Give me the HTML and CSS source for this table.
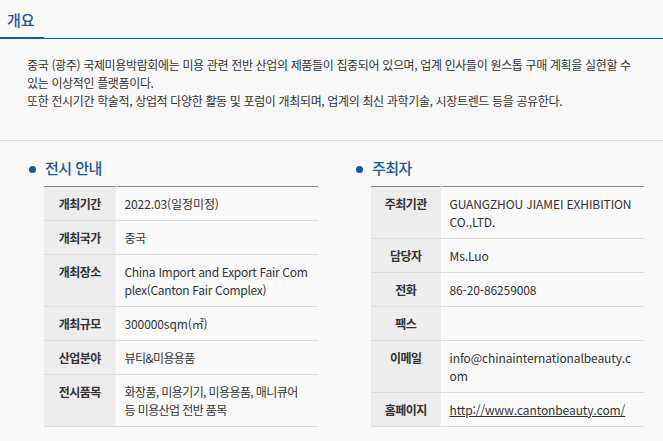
FILE: index.html
```html
<!DOCTYPE html>
<html lang="ko">
<head>
    <meta charset="UTF-8">
    <title>개요</title>
    <link rel="stylesheet" href="styles.css">
</head>
<body>

    <div class="tab-bar">
        <h2 class="tab-title">개요</h2>
    </div>

    <div class="intro">
        <p>중국 (광주) 국제미용박람회에는 미용 관련 전반 산업의 제품들이 집중되어 있으며, 업계 인사들이 원스톱 구매 계획을 실현할 수 있는 이상적인 플랫폼이다.<br>
        또한 전시기간 학술적, 상업적 다양한 활동 및 포럼이 개최되며, 업계의 최신 과학기술, 시장트렌드 등을 공유한다.</p>
    </div>

    <div class="info-wrap">
        <div class="info-box">
            <h3 class="info-title">전시 안내</h3>
            <table class="info-table">
                <tr><th>개최기간</th><td class="en">2022.03(일정미정)</td></tr>
                <tr><th>개최국가</th><td>중국</td></tr>
                <tr><th>개최장소</th><td class="en long">China Import and Export Fair Complex(Canton Fair Complex)</td></tr>
                <tr><th>개최규모</th><td class="en">300000sqm(㎡)</td></tr>
                <tr><th>산업분야</th><td>뷰티&amp;미용용품</td></tr>
                <tr><th>전시품목</th><td>화장품, 미용기기, 미용용품, 매니큐어 등 미용산업 전반 품목</td></tr>
            </table>
        </div>

        <div class="info-box">
            <h3 class="info-title">주최자</h3>
            <table class="info-table right">
                <tr><th>주최기관</th><td class="en">GUANGZHOU JIAMEI EXHIBITION CO.,LTD.</td></tr>
                <tr><th>담당자</th><td class="en">Ms.Luo</td></tr>
                <tr><th>전화</th><td class="en">86-20-86259008</td></tr>
                <tr><th>팩스</th><td></td></tr>
                <tr><th>이메일</th><td class="en">info@chinainternationalbeauty.com</td></tr>
                <tr><th>홈페이지</th><td class="en"><a href="#">http://www.cantonbeauty.com/</a></td></tr>
            </table>
        </div>
    </div>

</body>
</html>
```
FILE: styles.css
```css
body {
    margin: 0;
    background: #f9f9f9;
    font-family: "Noto Sans CJK KR", "Noto Sans", sans-serif;
    color: #333;
    font-size: 12px;
}

.tab-bar {
    height: 38px;
    background: #fafafa;
    border-bottom: 1px solid #1b5796;
}

.tab-title {
    display: inline-block;
    margin: 0;
    padding: 8px 9px 0 7px;
    height: 29px;
    box-sizing: content-box;
    border-bottom: 2px solid #1b5796;
    color: #1b5796;
    font-size: 15px;
    font-weight: 500;
    line-height: 24px;
}

.intro {
    padding: 17px 27px 30px;
    border-bottom: 1px solid #e0e0e0;
}

.intro p {
    margin: 0;
    line-height: 18px;
    letter-spacing: -0.35px;
}

.info-wrap {
    display: grid;
    grid-template-columns: 327px 1fr;
    padding: 15px 0 0 27px;
}

.info-title {
    margin: 0 0 6px;
    color: #1b5796;
    font-size: 15px;
    font-weight: 500;
    line-height: 24px;
    letter-spacing: -0.5px;
    position: relative;
    padding-left: 18px;
}

.info-title::before {
    content: "";
    position: absolute;
    left: 2px;
    top: 10px;
    width: 7px;
    height: 7px;
    border-radius: 50%;
    background: #1b5796;
}

.info-table {
    margin-left: 17px;
    width: 274px;
    table-layout: fixed;
    border-collapse: collapse;
    border-top: 1px solid #888;
}

.info-table.right {
    width: 273px;
}

.info-table th,
.info-table td {
    border-bottom: 1px solid #dcdcdc;
    padding: 8px 8px 7px;
    line-height: 18px;
    vertical-align: top;
    font-size: 12px;
}

.info-table th {
    width: 72px;
    box-sizing: border-box;
    background: #ededed;
    font-weight: 700;
    text-align: center;
    letter-spacing: -0.5px;
    border-right: 1px solid #fff;
}

.info-table.right th {
    width: 70px;
}

.info-table td {
    background: #fafafa;
    word-break: break-all;
    letter-spacing: -0.6px;
}

.info-table td.en {
    letter-spacing: -0.1px;
}

.info-table td.long {
    letter-spacing: -0.3px;
}

.info-table a {
    color: #333;
}
```
